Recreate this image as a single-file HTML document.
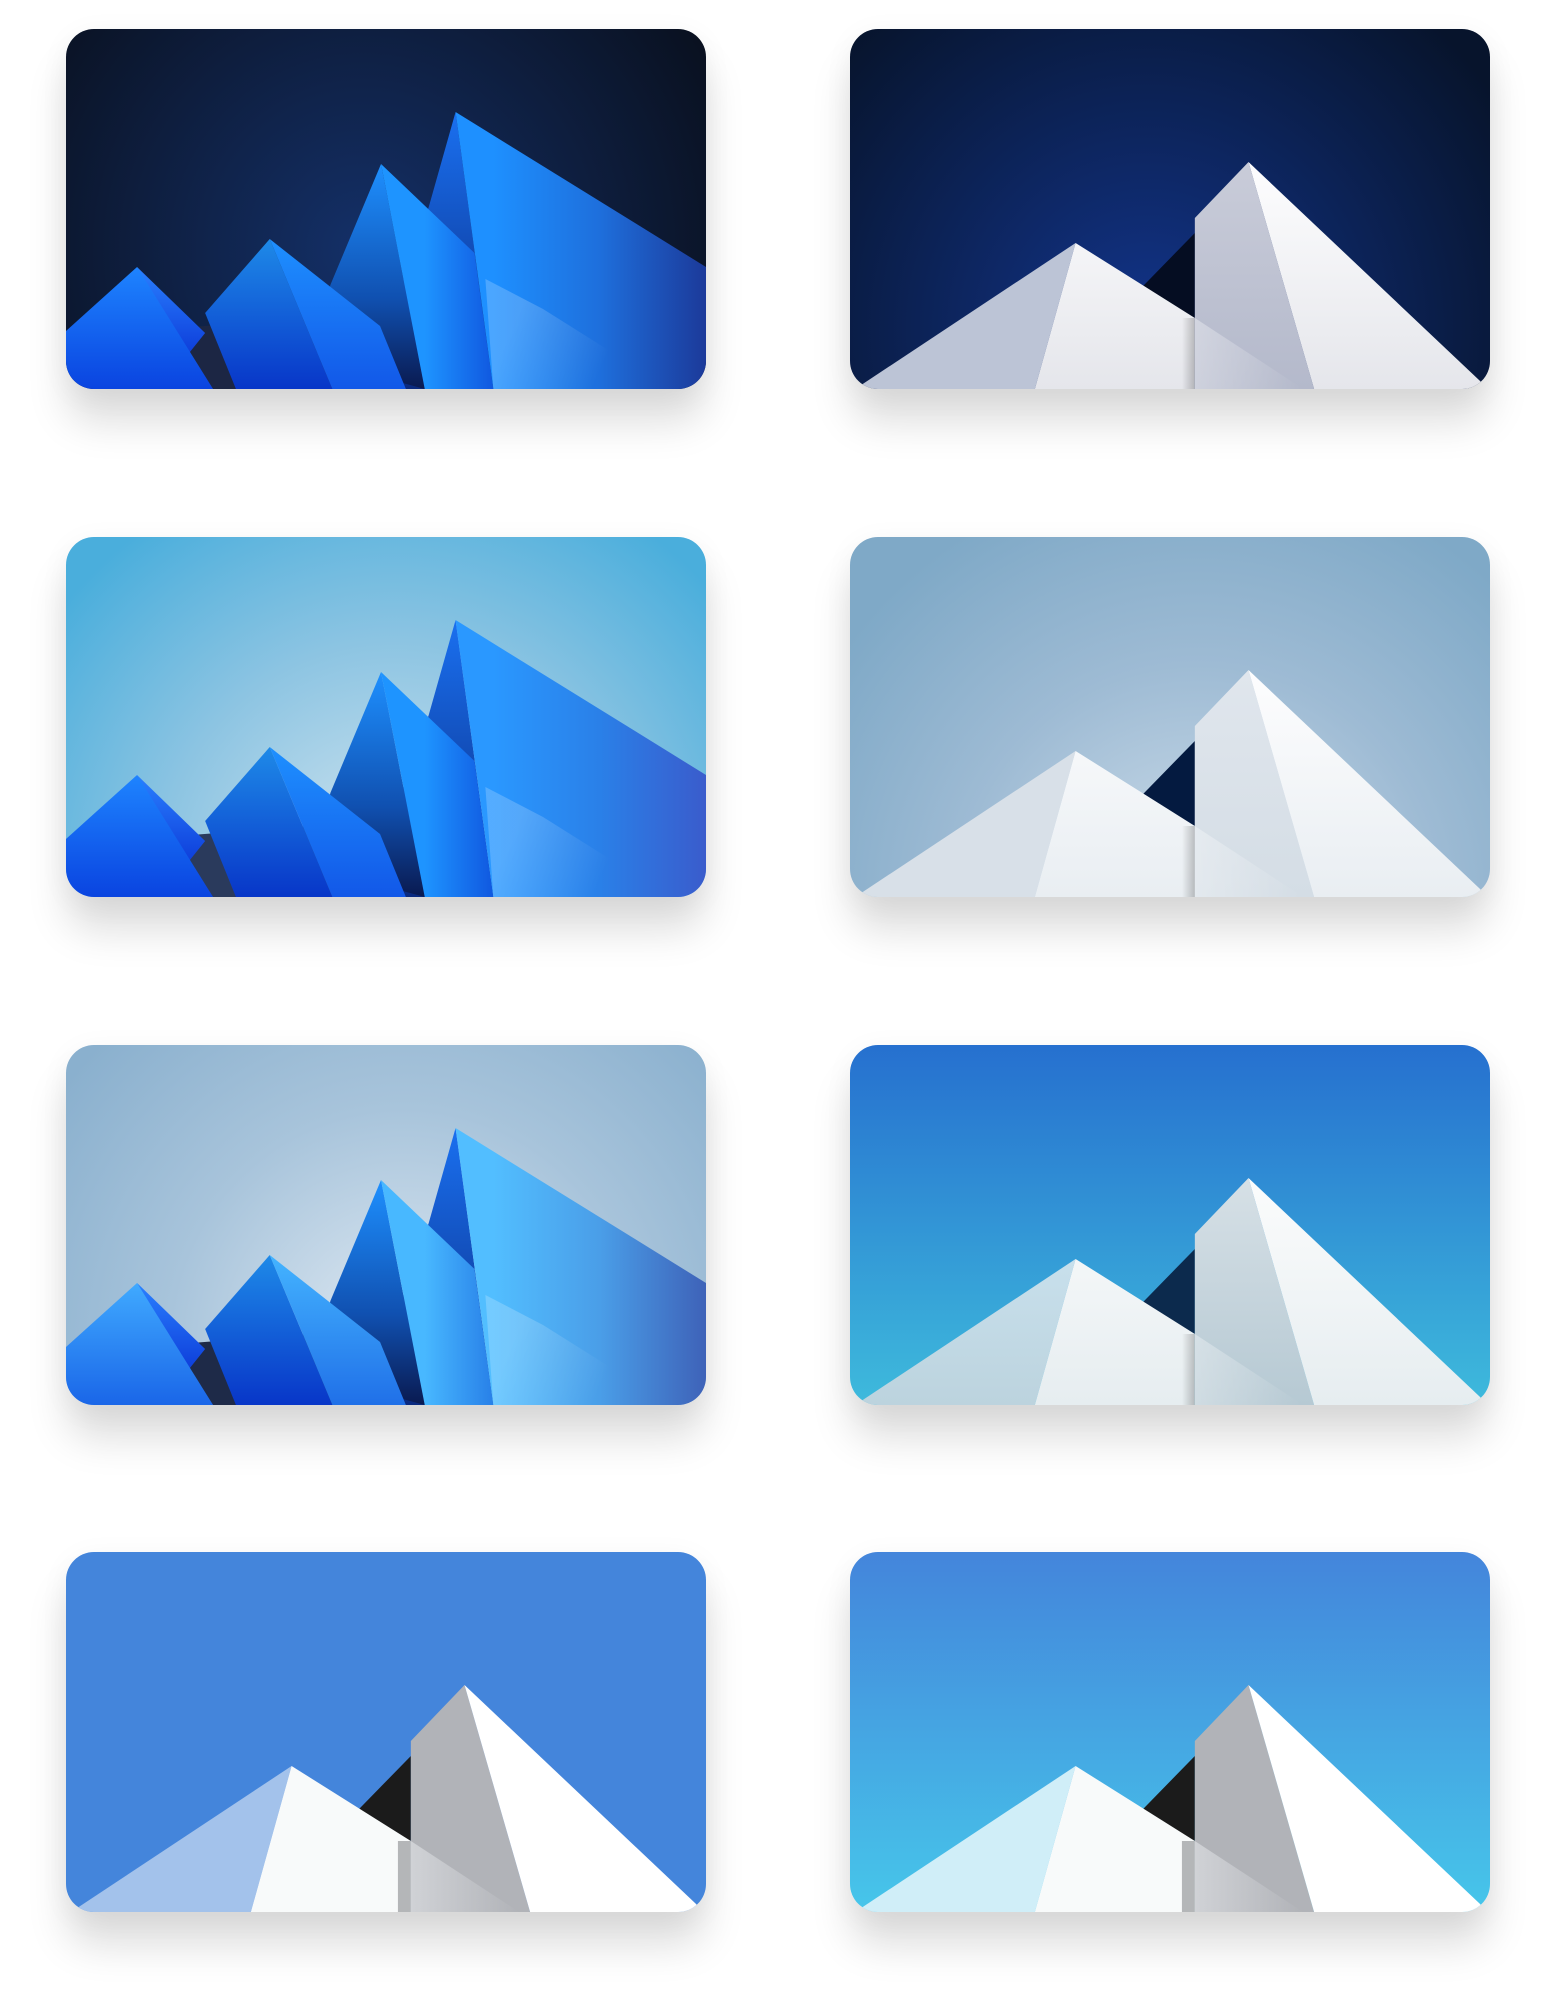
<!DOCTYPE html>
<html><head><meta charset="utf-8">
<style>
html,body{margin:0;padding:0;background:#fff;width:1556px;height:2012px;overflow:hidden;position:relative;font-family:"Liberation Sans",sans-serif}
.c{position:absolute;width:640px;height:360px;border-radius:28px;overflow:hidden;box-shadow:0 34px 40px rgba(0,0,0,0.13),0 6px 30px rgba(0,0,0,0.05)}
.c svg{display:block}
</style></head><body>
<svg width="0" height="0" style="position:absolute">
<defs>
<linearGradient id="gA" x1="430" y1="0" x2="644" y2="0" gradientUnits="userSpaceOnUse"><stop offset="0" stop-color="#1e90ff"/><stop offset="0.5" stop-color="#1e6fdc"/><stop offset="1" stop-color="#1c3a9a"/></linearGradient>
<linearGradient id="gA2" x1="430" y1="0" x2="644" y2="0" gradientUnits="userSpaceOnUse"><stop offset="0" stop-color="#2a98ff"/><stop offset="0.5" stop-color="#2a80e8"/><stop offset="1" stop-color="#3a5ccc"/></linearGradient>
<linearGradient id="gA3" x1="430" y1="0" x2="644" y2="0" gradientUnits="userSpaceOnUse"><stop offset="0" stop-color="#52beff"/><stop offset="0.5" stop-color="#4a9ee8"/><stop offset="1" stop-color="#3e62b8"/></linearGradient>
<linearGradient id="gB" x1="0" y1="83" x2="0" y2="360" gradientUnits="userSpaceOnUse"><stop offset="0" stop-color="#1a70f0"/><stop offset="1" stop-color="#0a2a80"/></linearGradient>
<linearGradient id="gC" x1="0" y1="135" x2="0" y2="360" gradientUnits="userSpaceOnUse"><stop offset="0" stop-color="#1e90ff"/><stop offset="0.6" stop-color="#1050b0"/><stop offset="1" stop-color="#0a1a50"/></linearGradient>
<linearGradient id="gD" x1="361" y1="0" x2="430" y2="0" gradientUnits="userSpaceOnUse"><stop offset="0" stop-color="#1e94ff"/><stop offset="1" stop-color="#1058e0"/></linearGradient>
<linearGradient id="gD3" x1="361" y1="0" x2="430" y2="0" gradientUnits="userSpaceOnUse"><stop offset="0" stop-color="#48b8ff"/><stop offset="1" stop-color="#2880e8"/></linearGradient>
<linearGradient id="gE" x1="0" y1="210" x2="0" y2="360" gradientUnits="userSpaceOnUse"><stop offset="0" stop-color="#1e8ae8"/><stop offset="1" stop-color="#0836c8"/></linearGradient>
<linearGradient id="gF" x1="0" y1="210" x2="0" y2="360" gradientUnits="userSpaceOnUse"><stop offset="0" stop-color="#1e90ff"/><stop offset="1" stop-color="#1258e8"/></linearGradient>
<linearGradient id="gF3" x1="0" y1="210" x2="0" y2="360" gradientUnits="userSpaceOnUse"><stop offset="0" stop-color="#44b4ff"/><stop offset="1" stop-color="#2070e8"/></linearGradient>
<linearGradient id="gG" x1="0" y1="238" x2="0" y2="360" gradientUnits="userSpaceOnUse"><stop offset="0" stop-color="#1e84ff"/><stop offset="1" stop-color="#0a44e0"/></linearGradient>
<linearGradient id="gG3" x1="0" y1="238" x2="0" y2="360" gradientUnits="userSpaceOnUse"><stop offset="0" stop-color="#40aaff"/><stop offset="1" stop-color="#1a66e8"/></linearGradient>
<linearGradient id="gH" x1="0" y1="238" x2="0" y2="330" gradientUnits="userSpaceOnUse"><stop offset="0" stop-color="#2a80ff"/><stop offset="1" stop-color="#0c3ad8"/></linearGradient>
<linearGradient id="sh" x1="334" y1="0" x2="347" y2="0" gradientUnits="userSpaceOnUse"><stop offset="0" stop-color="#000" stop-opacity="0"/><stop offset="1" stop-color="#000" stop-opacity="0.22"/></linearGradient>
<linearGradient id="ov" x1="347" y1="0" x2="454" y2="0" gradientUnits="userSpaceOnUse"><stop offset="0" stop-color="#fff" stop-opacity="0.35"/><stop offset="1" stop-color="#fff" stop-opacity="0"/></linearGradient>
<linearGradient id="streak" x1="440" y1="320" x2="530" y2="360" gradientUnits="userSpaceOnUse"><stop offset="0" stop-color="#fff" stop-opacity="0.2"/><stop offset="1" stop-color="#fff" stop-opacity="0"/></linearGradient>
</defs></svg>

<!-- Card 1 -->
<div class="c" style="left:66px;top:29px"><svg width="640" height="360" viewBox="0 0 644 360" preserveAspectRatio="none">
<defs><radialGradient id="b1" cx="300" cy="220" r="420" gradientUnits="userSpaceOnUse"><stop offset="0" stop-color="#143068"/><stop offset="1" stop-color="#090f1c"/></radialGradient></defs>
<rect width="644" height="360" fill="url(#b1)"/>
<polygon points="100,300 360,280 360,360 100,360" fill="#1c2644"/>
<polygon points="392,83 365,178 300,360 430,360" fill="url(#gB)"/>
<polygon points="317,135 266,256 250,330 361,360" fill="url(#gC)"/>
<polygon points="317,135 411,224 430,360 361,360" fill="url(#gD)"/>
<polygon points="392,83 644,238 644,360 430,360" fill="url(#gA)"/>
<polygon points="422,250 430,360 540,360 560,330 480,280" fill="url(#streak)"/>
<polygon points="205,210 140,284 171,360 268,360" fill="url(#gE)"/>
<polygon points="205,210 316,297 342,360 268,360" fill="url(#gF)"/>
<polygon points="71.5,238 140,304 115,335" fill="url(#gH)"/>
<polygon points="71.5,238 0,302 0,360 148,360" fill="url(#gG)"/>
</svg></div>

<!-- Card 3 -->
<div class="c" style="left:66px;top:537px"><svg width="640" height="360" viewBox="0 0 644 360" preserveAspectRatio="none">
<defs><radialGradient id="b3" cx="330" cy="340" r="430" gradientUnits="userSpaceOnUse"><stop offset="0" stop-color="#d4e6f0"/><stop offset="0.55" stop-color="#8cc4e2"/><stop offset="1" stop-color="#4aaedc"/></radialGradient></defs>
<rect width="644" height="360" fill="url(#b3)"/>
<polygon points="100,300 360,280 360,360 100,360" fill="#2a3a5c"/>
<polygon points="392,83 365,178 300,360 430,360" fill="url(#gB)"/>
<polygon points="317,135 266,256 250,330 361,360" fill="url(#gC)"/>
<polygon points="317,135 411,224 430,360 361,360" fill="url(#gD)"/>
<polygon points="392,83 644,238 644,360 430,360" fill="url(#gA2)"/>
<polygon points="422,250 430,360 540,360 560,330 480,280" fill="url(#streak)"/>
<polygon points="205,210 140,284 171,360 268,360" fill="url(#gE)"/>
<polygon points="205,210 316,297 342,360 268,360" fill="url(#gF)"/>
<polygon points="71.5,238 140,304 115,335" fill="url(#gH)"/>
<polygon points="71.5,238 0,302 0,360 148,360" fill="url(#gG)"/>
</svg></div>

<!-- Card 5 -->
<div class="c" style="left:66px;top:1045px"><svg width="640" height="360" viewBox="0 0 644 360" preserveAspectRatio="none">
<defs><radialGradient id="b5" cx="340" cy="300" r="430" gradientUnits="userSpaceOnUse"><stop offset="0" stop-color="#e0eaf3"/><stop offset="0.55" stop-color="#a8c4db"/><stop offset="1" stop-color="#8ab0ce"/></radialGradient></defs>
<rect width="644" height="360" fill="url(#b5)"/>
<polygon points="100,300 360,280 360,360 100,360" fill="#1e2a48"/>
<polygon points="392,83 365,178 300,360 430,360" fill="url(#gB)"/>
<polygon points="317,135 266,256 250,330 361,360" fill="url(#gC)"/>
<polygon points="317,135 411,224 430,360 361,360" fill="url(#gD3)"/>
<polygon points="392,83 644,238 644,360 430,360" fill="url(#gA3)"/>
<polygon points="422,250 430,360 540,360 560,330 480,280" fill="url(#streak)"/>
<polygon points="205,210 140,284 171,360 268,360" fill="url(#gE)"/>
<polygon points="205,210 316,297 342,360 268,360" fill="url(#gF3)"/>
<polygon points="71.5,238 140,304 115,335" fill="url(#gH)"/>
<polygon points="71.5,238 0,302 0,360 148,360" fill="url(#gG3)"/>
</svg></div>

<!-- Card 2 -->
<div class="c" style="left:850px;top:29px"><svg width="640" height="360" viewBox="0 0 644 360" preserveAspectRatio="none">
<defs>
<radialGradient id="b2" cx="300" cy="300" r="420" gradientUnits="userSpaceOnUse"><stop offset="0" stop-color="#12348a"/><stop offset="1" stop-color="#07142c"/></radialGradient>
<linearGradient id="f2" x1="0" y1="134" x2="0" y2="360" gradientUnits="userSpaceOnUse"><stop offset="0" stop-color="#fdfdfe"/><stop offset="1" stop-color="#e5e6eb"/></linearGradient>
<linearGradient id="s2" x1="0" y1="134" x2="0" y2="360" gradientUnits="userSpaceOnUse"><stop offset="0" stop-color="#c9ccd9"/><stop offset="1" stop-color="#b4b9cb"/></linearGradient>
</defs>
<rect width="644" height="360" fill="url(#b2)"/>
<polygon points="290,262 347,204 347,289" fill="#050d22"/>
<polygon points="347,189 401,133 467,360 347,360" fill="url(#s2)"/>
<polygon points="401,133 634,352 650,372 467,360" fill="url(#f2)"/>
<polygon points="227,214 -10,370 186,360" fill="#bcc4d6"/>
<polygon points="227,214 347,289 347,360 186,360" fill="url(#f2)"/>
<rect x="334" y="289" width="13" height="71" fill="url(#sh)"/>
<polygon points="347,289 456,360 347,360" fill="url(#ov)"/>
</svg></div>

<!-- Card 4 -->
<div class="c" style="left:850px;top:537px"><svg width="640" height="360" viewBox="0 0 644 360" preserveAspectRatio="none">
<defs>
<radialGradient id="b4" cx="350" cy="370" r="440" gradientUnits="userSpaceOnUse"><stop offset="0" stop-color="#d0dfeb"/><stop offset="0.55" stop-color="#9ebbd4"/><stop offset="1" stop-color="#7fa9c7"/></radialGradient>
<linearGradient id="f4" x1="0" y1="134" x2="0" y2="360" gradientUnits="userSpaceOnUse"><stop offset="0" stop-color="#fdfdfe"/><stop offset="1" stop-color="#e9eef2"/></linearGradient>
<linearGradient id="s4" x1="0" y1="134" x2="0" y2="360" gradientUnits="userSpaceOnUse"><stop offset="0" stop-color="#e0e6ed"/><stop offset="1" stop-color="#d4dde5"/></linearGradient>
</defs>
<rect width="644" height="360" fill="url(#b4)"/>
<polygon points="290,262 347,204 347,289" fill="#041a40"/>
<polygon points="347,189 401,133 467,360 347,360" fill="url(#s4)"/>
<polygon points="401,133 634,352 650,372 467,360" fill="url(#f4)"/>
<polygon points="227,214 -10,370 186,360" fill="#d8e0e8"/>
<polygon points="227,214 347,289 347,360 186,360" fill="url(#f4)"/>
<rect x="334" y="289" width="13" height="71" fill="url(#sh)"/>
<polygon points="347,289 456,360 347,360" fill="url(#ov)"/>
</svg></div>

<!-- Card 6 -->
<div class="c" style="left:850px;top:1045px"><svg width="640" height="360" viewBox="0 0 644 360" preserveAspectRatio="none">
<defs>
<linearGradient id="b6" x1="0" y1="0" x2="0" y2="360" gradientUnits="userSpaceOnUse"><stop offset="0" stop-color="#2670cf"/><stop offset="1" stop-color="#3ebadc"/></linearGradient>
<linearGradient id="f6" x1="0" y1="134" x2="0" y2="360" gradientUnits="userSpaceOnUse"><stop offset="0" stop-color="#fbfcfc"/><stop offset="1" stop-color="#e6edf0"/></linearGradient>
<linearGradient id="s6" x1="0" y1="134" x2="0" y2="360" gradientUnits="userSpaceOnUse"><stop offset="0" stop-color="#d6e0e6"/><stop offset="1" stop-color="#b6c9d3"/></linearGradient>
<linearGradient id="l6" x1="0" y1="214" x2="0" y2="360" gradientUnits="userSpaceOnUse"><stop offset="0" stop-color="#c8e0ec"/><stop offset="1" stop-color="#bcd3de"/></linearGradient>
</defs>
<rect width="644" height="360" fill="url(#b6)"/>
<polygon points="290,262 347,204 347,289" fill="#0c2a4d"/>
<polygon points="347,189 401,133 467,360 347,360" fill="url(#s6)"/>
<polygon points="401,133 634,352 650,372 467,360" fill="url(#f6)"/>
<polygon points="227,214 -10,370 186,360" fill="url(#l6)"/>
<polygon points="227,214 347,289 347,360 186,360" fill="url(#f6)"/>
<rect x="334" y="289" width="13" height="71" fill="url(#sh)"/>
<polygon points="347,289 456,360 347,360" fill="url(#ov)"/>
</svg></div>

<!-- Card 7 -->
<div class="c" style="left:66px;top:1552px"><svg width="640" height="360" viewBox="0 0 644 360" preserveAspectRatio="none">
<defs><linearGradient id="o7" x1="347" y1="0" x2="456" y2="0" gradientUnits="userSpaceOnUse"><stop offset="0" stop-color="#d0d2d6"/><stop offset="1" stop-color="#b1b3b8"/></linearGradient></defs>
<rect width="644" height="360" fill="#4485db"/>
<polygon points="290,262 347,204 347,289" fill="#1b1b1b"/>
<polygon points="347,189 401,133 467,360 347,360" fill="#b1b3b8"/>
<polygon points="401,133 634,352 650,372 467,360" fill="#ffffff"/>
<polygon points="227,214 -10,370 186,360" fill="#a3c2eb"/>
<polygon points="227,214 347,289 347,360 186,360" fill="#f8fafa"/>
<rect x="334" y="289" width="13" height="71" fill="#b4b6b8"/>
<polygon points="347,289 456,360 347,360" fill="url(#o7)"/>
</svg></div>

<!-- Card 8 -->
<div class="c" style="left:850px;top:1552px"><svg width="640" height="360" viewBox="0 0 644 360" preserveAspectRatio="none">
<defs>
<linearGradient id="b8" x1="0" y1="0" x2="0" y2="360" gradientUnits="userSpaceOnUse"><stop offset="0" stop-color="#4485db"/><stop offset="1" stop-color="#46c6ea"/></linearGradient>
<linearGradient id="o8" x1="347" y1="0" x2="456" y2="0" gradientUnits="userSpaceOnUse"><stop offset="0" stop-color="#d0d2d6"/><stop offset="1" stop-color="#b1b3b8"/></linearGradient>
</defs>
<rect width="644" height="360" fill="url(#b8)"/>
<polygon points="290,262 347,204 347,289" fill="#1b1b1b"/>
<polygon points="347,189 401,133 467,360 347,360" fill="#b1b3b8"/>
<polygon points="401,133 634,352 650,372 467,360" fill="#ffffff"/>
<polygon points="227,214 -10,370 186,360" fill="#d0eef8"/>
<polygon points="227,214 347,289 347,360 186,360" fill="#f8fafa"/>
<rect x="334" y="289" width="13" height="71" fill="#b4b6b8"/>
<polygon points="347,289 456,360 347,360" fill="url(#o8)"/>
</svg></div>
</body></html>
